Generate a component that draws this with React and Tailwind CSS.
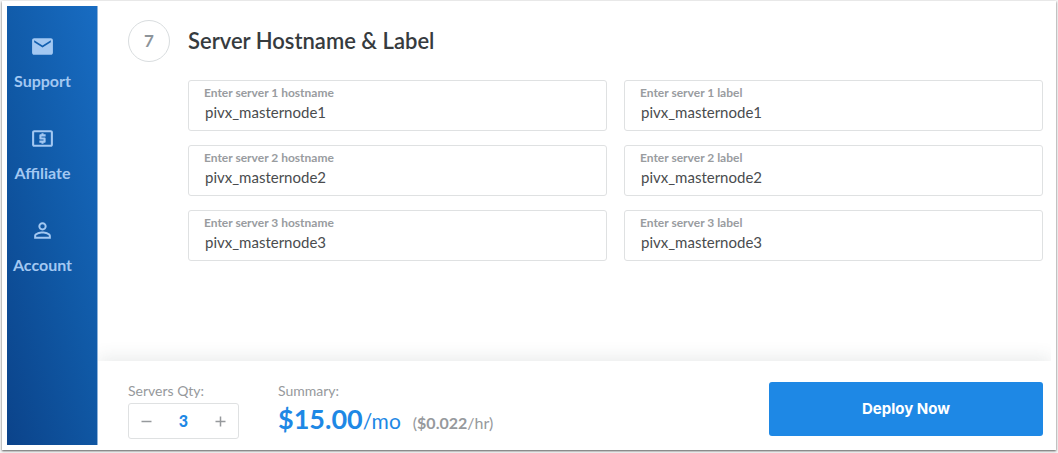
import { useState } from "react";
import { MdEmail, MdLocalAtm, MdPersonOutline } from "react-icons/md";

const navItems = [
  { label: "Support", Icon: MdEmail },
  { label: "Affiliate", Icon: MdLocalAtm },
  { label: "Account", Icon: MdPersonOutline },
];

function Field({ id, label, defaultValue }) {
  return (
    <div className="flex h-[51px] flex-col rounded-[3px] border border-[#dfe1e2] px-[15px] pt-1 focus-within:border-[#1e88e5]">
      <label htmlFor={id} className="text-[12px] leading-4 font-bold text-[#999c9f]">
        {label}
      </label>
      <input
        id={id}
        type="text"
        defaultValue={defaultValue}
        className="w-full bg-transparent pl-px text-[15px] leading-[22px] text-[#4a4c4e] outline-none"
      />
    </div>
  );
}

export default function App() {
  const [qty, setQty] = useState(3);
  const servers = Array.from({ length: qty }, (_, i) => i + 1);

  return (
    <div className="flex min-h-screen bg-[#f4f4f4] pt-px pr-[2px] pb-[3px] pl-[2px] font-['Lato',sans-serif]">
      <div className="flex grow bg-white p-[5px] shadow-[0_1px_2px_#5a5a5a]">
        <nav className="w-[91px] shrink-0 border-r border-[#8fb3d9] bg-[linear-gradient(75deg,#0b438a_0%,#1059a6_50%,#186cc2_100%)] pt-7">
          <ul className="flex w-[71px] flex-col gap-[33px]">
            {navItems.map(({ label, Icon }) => (
              <li key={label}>
                <a href="#" className="flex flex-col items-center gap-[10px] text-[#a3c8f2]">
                  <Icon size={25} aria-hidden="true" />
                  <span className="text-base leading-6 font-bold">{label}</span>
                </a>
              </li>
            ))}
          </ul>
        </nav>

        <div className="flex min-w-0 grow flex-col overflow-hidden">
          <main className="grow pt-[14px] pr-2 pl-[30px]">
            <header className="flex items-center gap-[18px]">
              <span className="flex size-[42px] items-center justify-center rounded-full border border-[#d9dddf] text-[17px] font-bold text-[#8d949a]">
                7
              </span>
              <h2 className="text-[22px] leading-7 font-semibold text-[#363b3e]">
                Server Hostname &amp; Label
              </h2>
            </header>
            <div className="grid grid-cols-2 gap-x-[17px] gap-y-[14px] pt-[18px] pb-6 pl-[60px]">
              {servers.flatMap((n) => [
                <Field
                  key={`host-${n}`}
                  id={`host-${n}`}
                  label={`Enter server ${n} hostname`}
                  defaultValue={`pivx_masternode${n}`}
                />,
                <Field
                  key={`label-${n}`}
                  id={`label-${n}`}
                  label={`Enter server ${n} label`}
                  defaultValue={`pivx_masternode${n}`}
                />,
              ])}
            </div>
          </main>

          <footer className="flex items-start bg-white pt-[21px] pr-2 pb-[6px] pl-[30px] shadow-[0_-4px_16px_rgba(60,80,80,0.11)]">
            <div>
              <div className="text-sm leading-[18px] text-[#96999c]">Servers Qty:</div>
              <div className="mt-[3px] flex h-9 w-[111px] items-center justify-between rounded-[3px] border border-[#dfe1e2] px-[11px]">
                <button
                  type="button"
                  aria-label="Decrease quantity"
                  onClick={() => setQty(Math.max(1, qty - 1))}
                  className="text-[#96999c]"
                >
                  <svg width="13" height="13" viewBox="0 0 13 13" aria-hidden="true">
                    <path d="M1.5 6.5h10" stroke="currentColor" strokeWidth="1.5" />
                  </svg>
                </button>
                <output className="text-base font-black text-[#1e88e5]">{qty}</output>
                <button
                  type="button"
                  aria-label="Increase quantity"
                  onClick={() => setQty(qty + 1)}
                  className="text-[#96999c]"
                >
                  <svg width="13" height="13" viewBox="0 0 13 13" aria-hidden="true">
                    <path d="M1.5 6.5h10M6.5 1.5v10" stroke="currentColor" strokeWidth="1.5" />
                  </svg>
                </button>
              </div>
            </div>

            <div className="pl-[39px]">
              <div className="text-sm leading-[18px] text-[#96999c]">Summary:</div>
              <div className="mt-[3px] flex items-baseline leading-8">
                <span className="text-[27px] font-bold text-[#1e88e5]">$15.00</span>
                <span className="text-[21px] text-[#1e88e5]">/mo</span>
                <span className="pl-3 text-base leading-8 text-[#96999c]">
                  (<b>$0.022</b>/hr)
                </span>
              </div>
            </div>

            <button
              type="button"
              className="ml-auto h-[54px] w-[274px] rounded-[3px] bg-[#1e88e5] font-['Inter',sans-serif] text-[15px] font-bold text-white"
            >
              Deploy Now
            </button>
          </footer>
        </div>
      </div>
    </div>
  );
}
